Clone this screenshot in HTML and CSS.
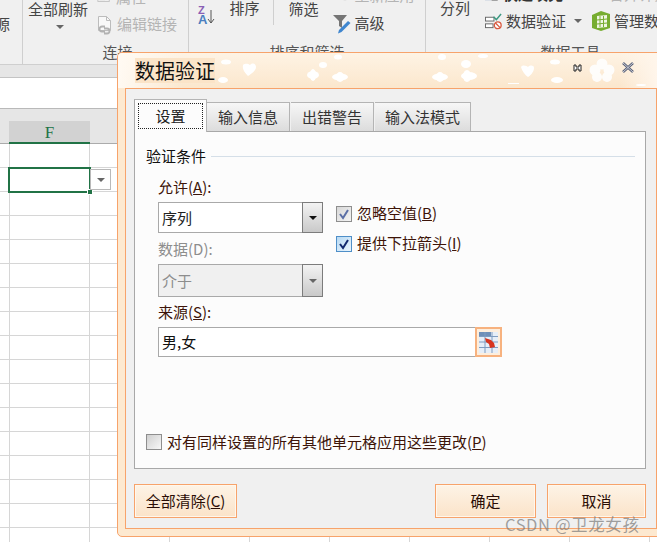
FILE: index.html
```html
<!DOCTYPE html>
<html lang="zh-CN">
<head>
  <meta charset="UTF-8">
  <title>数据验证</title>
  <link rel="stylesheet" href="styles.css">
</head>
<body>
  <div class="app">
    <!-- Ribbon -->
    <div class="ribbon">
      <div class="group group-source">
        <div class="group-body"><span class="cut-text">源</span></div>
      </div>
      <div class="group group-connect">
        <div class="group-body">
          <div class="big-item">
            <span>全部刷新</span>
            <span class="caret"></span>
          </div>
          <div class="stack">
            <div class="stack-row row-cut muted">
              <svg class="icon" viewBox="0 0 16 16"><rect x="1" y="3" width="13" height="10" fill="#f4f4f4" stroke="#bdbdbd"/><path d="M3 8h9M3 11h6" stroke="#bdbdbd"/></svg>
              <span>属性</span>
            </div>
            <div class="stack-row row-link muted">
              <svg class="icon icon-tall" viewBox="0 0 15 19"><path d="M1.500 .5h8l4 4v10h-12z" fill="#f8f8f8" stroke="#bcbcbc"/><path d="M9.500 .5v4h4" fill="none" stroke="#bcbcbc"/><path d="M8 12H5a2.500 2.500 0 0 0 0 5h3M7 14h3a2.500 2.500 0 0 1 0 5H7" fill="none" stroke="#b2b2b2" stroke-width="1.800" transform="translate(0 -1.500)"/></svg>
              <span>编辑链接</span>
            </div>
          </div>
        </div>
        <div class="group-label">连接</div>
      </div>
      <div class="group group-sort">
        <div class="group-body">
          <div class="sort-icon">
            <div class="sort-letters"><span class="letter-z">Z</span><span class="letter-a">A</span></div>
            <svg width="8" height="16" viewBox="0 0 8 16"><path d="M4 1v13M1 10l3 4 3-4" fill="none" stroke="#555"/></svg>
          </div>
          <div class="big-item item-sort">排序</div>
          <div class="big-item item-filter">筛选</div>
          <div class="stack stack-filter">
            <div class="stack-row row-reapply muted">
              <svg class="icon" viewBox="0 0 16 16"><path d="M13 8a5 5 0 1 1-2-4" fill="none" stroke="#c4c4c4" stroke-width="2"/></svg>
              <span>重新应用</span>
            </div>
            <div class="stack-row row-advanced">
              <svg class="icon icon-funnel" viewBox="0 0 18 19"><path d="M0 0h14L9 6v7L6 11V6z" fill="#757575"/><path d="M15 6l2.500 2-9 9-3.500 1.500 1-3.500z" fill="#3f86cf"/></svg>
              <span>高级</span>
            </div>
          </div>
        </div>
        <div class="group-label">排序和筛选</div>
      </div>
      <div class="group group-tools">
        <div class="group-body">
          <div class="big-item item-split">分列</div>
          <div class="stack stack-tools">
            <div class="stack-row row-top">
              <svg class="icon" viewBox="0 0 16 16"><rect x="0" y="7" width="7" height="8" fill="#4a72a8"/><rect x="8" y="7" width="6" height="8" fill="#fff" stroke="#666"/></svg>
              <span>快速填充</span>
              <span class="row-top-side">合并计算</span>
            </div>
            <div class="stack-row row-tools">
              <svg class="icon icon-check" viewBox="0 0 18 18"><rect x="0.5" y="4.500" width="9" height="4" fill="#fff" stroke="#666"/><rect x="0.5" y="11.500" width="8" height="4" fill="#fff" stroke="#666"/><path d="M9 4l3 3 5-6" fill="none" stroke="#3d9a82" stroke-width="1.600"/><circle cx="13.500" cy="13" r="3.600" fill="#fff" stroke="#d9583f" stroke-width="1.400"/><path d="M11 10.500l5 5" stroke="#d9583f" stroke-width="1.400"/></svg>
              <span>数据验证</span>
              <span class="caret caret-side"></span>
              <svg class="icon icon-cube" viewBox="0 0 20 20"><path d="M1 4l9-4 9 3v14l-9 3-9-3z" fill="#77ad30"/><path d="M6 5l10-1v12l-10 1z" fill="#f0f6e4"/><path d="M9 5v11M12.500 5v11M6 9l10-1M6 13l10-1" stroke="#77ad30"/></svg>
              <span>管理数据模型</span>
            </div>
          </div>
        </div>
        <div class="group-label">数据工具</div>
      </div>
    </div>

    <!-- Formula bar -->
    <div class="formula-band"></div>
    <div class="formula-bar"></div>

    <!-- Sheet -->
    <div class="col-header">
      <div class="col-f">F</div>
    </div>
    <div class="sheet">
      <div class="cell-selected"><span class="cell-handle"></span></div>
      <div class="cell-dropdown"><span class="caret"></span></div>
    </div>

    <!-- Dialog -->
    <div class="dialog">
      <div class="dialog-title">
        <svg class="petals" viewBox="0 0 548 36" width="548" height="36">
          <g fill="#fff">
            <ellipse cx="108" cy="9" rx="5" ry="2.500"/><ellipse cx="105" cy="27" rx="5" ry="3"/>
            <path d="M125 12c3-2 5-1 7 0 3-3 6-1 6 2 0 4-5 7-8 9-3-3-6-7-5-11z"/>
            <ellipse cx="195" cy="22" rx="6" ry="4"/><ellipse cx="195" cy="22" rx="3" ry="6"/>
            <ellipse cx="205" cy="12" rx="4" ry="3"/>
            <ellipse cx="220" cy="4" rx="4" ry="2.500"/>
            <ellipse cx="222" cy="24" rx="8" ry="3.500"/><ellipse cx="222" cy="24" rx="4" ry="5"/>
            <ellipse cx="322" cy="24" rx="8" ry="3.500"/><ellipse cx="322" cy="24" rx="4" ry="5"/>
            <ellipse cx="324" cy="4" rx="4" ry="3"/>
            <ellipse cx="348" cy="11" rx="5" ry="4"/>
            <ellipse cx="351" cy="23" rx="8" ry="4"/><ellipse cx="349" cy="23" rx="4" ry="6"/>
            <ellipse cx="365" cy="3" rx="5" ry="2"/>
            <path d="M403 14c2-3 6-1 7 0 2-2 6-2 6 1 0 4-4 8-6 9-3-2-6-6-7-10z"/>
            <rect x="390" y="30" width="11" height="1"/>
            <ellipse cx="437" cy="9" rx="5" ry="2.500"/>
            <ellipse cx="439" cy="27" rx="6" ry="3"/>
            <ellipse cx="523" cy="32" rx="5" ry="1"/>
          </g>
          <g fill="#fff" opacity="0.9">
            <circle cx="484" cy="11" r="5.500"/><circle cx="477" cy="17" r="5.500"/><circle cx="491" cy="17" r="5.500"/>
            <circle cx="479" cy="24" r="5"/><circle cx="489" cy="24" r="5"/>
          </g>
        </svg>
        <span class="title-text">数据验证</span>
        <div class="title-buttons">
          <svg class="win-min" width="9" height="8" viewBox="0 0 9 8"><path d="M1 1h2v2h3V1h2v6H6V5H3v2H1z" fill="#fff" stroke="#222" stroke-width="1"/></svg>
          <svg class="win-close" width="12" height="11" viewBox="0 0 12 11"><path d="M1 1l10 9M11 1L1 10" stroke="#5a6278" stroke-width="2.600"/><path d="M1 1l10 9M11 1L1 10" stroke="#e4e6ee" stroke-width="0.800"/></svg>
        </div>
      </div>
      <div class="dialog-body">
        <div class="tabs">
          <div class="tab tab-active"><span class="tab-focus">设置</span></div>
          <div class="tab tab-info">输入信息</div>
          <div class="tab tab-error">出错警告</div>
          <div class="tab tab-ime">输入法模式</div>
        </div>
        <div class="panel">
          <div class="legend"><span>验证条件</span><i></i></div>
          <div class="form">
            <div class="form-row">
              <div class="form-left">
                <label class="field-label">允许(<u>A</u>):</label>
                <div class="select select-allow">
                  <span class="select-value">序列</span>
                  <span class="select-btn"><span class="caret caret-black"></span></span>
                </div>
                <label class="field-label label-data">数据(D):</label>
                <div class="select select-disabled">
                  <span class="select-value">介于</span>
                  <span class="select-btn"><span class="caret"></span></span>
                </div>
              </div>
              <div class="form-right">
                <label class="check">
                  <span class="box box-grey"><svg width="12" height="12" viewBox="0 0 12 12"><path d="M2 6l3 4 5-8" fill="none" stroke="#5b6fa6" stroke-width="2"/></svg></span>
                  <span class="field-text">忽略空值(<u>B</u>)</span>
                </label>
                <label class="check">
                  <span class="box box-blue"><svg width="12" height="12" viewBox="0 0 12 12"><path d="M2 6l3 4 5-8" fill="none" stroke="#12296e" stroke-width="2"/></svg></span>
                  <span class="field-text">提供下拉箭头(<u>I</u>)</span>
                </label>
              </div>
            </div>
            <label class="field-label label-source">来源(<u>S</u>):</label>
            <div class="source">
              <span class="source-value">男,女</span>
              <span class="ref-btn">
                <svg width="19" height="21" viewBox="0 0 19 21"><rect width="19" height="21" fill="#e6eef8"/><rect width="12" height="4" fill="#6f8fb8"/><path d="M0 4.500h19M0 10h19M0 15.500h19M6 0v21M13 0v21" stroke="#7f9cc0"/><path d="M6 6l6 2 3 3 1 4-5 1-1-4-3-2z" fill="#d8341e"/></svg>
              </span>
            </div>
          </div>
          <label class="check check-all">
            <span class="box box-empty"></span>
            <span class="field-text">对有同样设置的所有其他单元格应用这些更改(<u>P</u>)</span>
          </label>
        </div>
        <div class="actions">
          <button class="btn btn-clear">全部清除(<u>C</u>)</button>
          <button class="btn btn-ok">确定</button>
          <button class="btn btn-cancel">取消</button>
        </div>
      </div>
    </div>

    <div class="watermark">CSDN @卫龙女孩</div>
  </div>
</body>
</html>
```

FILE: styles.css
```css
:root {
  --ribbon-bg: #f0f0f0;
  --ribbon-line: #cfcfcf;
  --band-bg: #e6e6e6;
  --grid-line: #d6d6d6;
  --excel-green: #217346;
  --skin-line: #f7a36b;
  --skin-bg: #fde9d0;
  --label-color: #3d1408;
}

* {
  margin: 0;
  padding: 0;
  box-sizing: border-box;
}

body {
  font-family: "Noto Sans CJK SC", "Liberation Sans", sans-serif;
  font-size: 15px;
  line-height: 20px;
  color: #222;
  background: #fff;
}

.app {
  position: relative;
  width: 657px;
  height: 542px;
  overflow: hidden;
}

/* Ribbon */
.ribbon {
  display: flex;
  height: 65px;
  background: var(--ribbon-bg);
  border-bottom: 1px solid var(--ribbon-line);
  color: #444;
}

.group {
  display: flex;
  flex-direction: column;
  flex: none;
  height: 64px;
  border-right: 1px solid var(--ribbon-line);
  white-space: nowrap;
}

.group-source { width: 23px; }
.group-connect { width: 166px; }
.group-sort { width: 237px; }
.group-tools { width: 231px; border-right: 0; }

.group-body {
  display: flex;
  height: 43px;
}

.group-label {
  height: 20px;
  margin-top: -1px;
  text-align: center;
  color: #555;
}

.group-connect .group-label { width: 189px; }
.group-tools .group-label { padding-left: 58px; }

.cut-text {
  margin: 14px 0 0 -5px;
}

.big-item {
  display: flex;
  flex-direction: column;
  align-items: center;
  gap: 8px;
  line-height: 17px;
}

.group-connect .big-item { margin-left: 5px; width: 60px; }
.group-connect .caret { margin-left: 4px; }

.caret {
  display: block;
  width: 0;
  height: 0;
  border-left: 4px solid transparent;
  border-right: 4px solid transparent;
  border-top: 4px solid #666;
}

.stack {
  display: flex;
  flex-direction: column;
  margin-top: -17px;
}

.stack-row {
  display: flex;
  align-items: center;
  gap: 5px;
  height: 26px;
}

.muted { color: #b4b4b4; }

.group-connect .stack { margin-left: 9px; }
.row-cut { height: 28px; }

.icon { flex: none; width: 14px; height: 14px; }
.icon-tall { width: 15px; height: 19px; margin-top: 2px; }

.stack-filter { margin: -18px 0 0 15px; }
.row-reapply { margin-left: 5px; gap: 2px; }
.row-advanced { height: 30px; gap: 3px; }
.icon-funnel { width: 18px; height: 19px; margin-top: 2px; }

.sort-icon {
  display: flex;
  align-items: flex-end;
  height: 25px;
  margin: 0 0 0 9px;
}

.sort-letters {
  display: flex;
  flex-direction: column;
  font-family: "Liberation Sans", sans-serif;
  font-size: 11px;
  line-height: 9px;
  font-weight: bold;
}

.letter-z { color: #8a5fb5; }
.letter-a { color: #4b7fc0; font-size: 13px; line-height: 10px; }

.item-sort { margin: -1px 0 0 14px; }
.item-filter {
  margin-left: 14px;
  padding-left: 14px;
  height: 25px;
  border-left: 1px solid var(--ribbon-line);
}

.item-split { margin: -1px 0 0 14px; }
.stack-tools { margin: -14px 0 0 15px; }
.stack-tools .stack-row { gap: 4px; }
.row-top { height: 16px; color: #333; font-weight: bold; }
.row-top-side { margin-left: 42px; color: #b4b4b4; font-weight: normal; }
.stack-tools .row-tools { height: 38px; }
.icon-check { width: 17px; height: 17px; }
.icon-cube { width: 20px; height: 20px; margin: 0 -1px 0 5px; }
.caret-side { margin-left: 4px; }

/* Formula bar */
.formula-band {
  height: 13px;
  background: var(--band-bg);
  border-bottom: 1px solid #c4c4c4;
}

.formula-bar {
  height: 31px;
  background: #fff;
  border-bottom: 1px solid #b9b9b9;
}

/* Sheet */
.col-header {
  display: flex;
  align-items: flex-end;
  height: 35px;
  padding-left: 9px;
  background: var(--band-bg);
  border-bottom: 1px solid #ababab;
}

.col-f {
  width: 81px;
  height: 23px;
  margin-bottom: -1px;
  text-align: center;
  font-family: "Liberation Serif", serif;
  font-size: 17px;
  line-height: 24px;
  color: var(--excel-green);
  background: #d2d2d2;
  border-bottom: 2px solid var(--excel-green);
}

.sheet {
  position: relative;
  height: 398px;
  background-color: #fff;
  background-image:
    linear-gradient(to right, var(--grid-line) 1px, transparent 1px),
    linear-gradient(to bottom, var(--grid-line) 1px, transparent 1px);
  background-size: 80px 24px;
  background-position: 9px -1px;
}

.cell-selected {
  position: absolute;
  left: 8px;
  top: 23px;
  width: 83px;
  height: 26px;
  border: 2px solid var(--excel-green);
}

.cell-handle {
  position: absolute;
  right: -4px;
  bottom: -4px;
  width: 4px;
  height: 4px;
  background: var(--excel-green);
  border: 1px solid #fff;
  box-sizing: content-box;
}

.cell-dropdown {
  position: absolute;
  left: 90px;
  top: 25px;
  display: flex;
  align-items: center;
  justify-content: center;
  width: 21px;
  height: 21px;
  background: #fff;
  border: 1px solid #b9b9b9;
}

/* Dialog */
.dialog {
  position: absolute;
  left: 117px;
  top: 52px;
  display: flex;
  flex-direction: column;
  width: 548px;
  height: 485px;
  padding: 0 7px 7px;
  background: var(--skin-bg);
  border: 1px solid var(--skin-line);
  border-radius: 5px;
}

.dialog-title {
  position: relative;
  display: flex;
  align-items: center;
  flex: none;
  height: 35px;
  margin: 0 -7px;
  padding-left: 17px;
  border-top-left-radius: 4px;
  background:
    linear-gradient(to right, transparent 92%, #fff6ec 99%),
    linear-gradient(to right, #fffaf3, transparent 12%),
    linear-gradient(to bottom, #fef3e4, #fbe7cd);
}

.petals {
  position: absolute;
  left: 0;
  top: 0;
}

.title-text {
  position: relative;
  font-size: 20px;
  line-height: 25px;
  color: #111;
  background: #fbe4c8;
}

.title-buttons {
  position: absolute;
  left: 455px;
  top: 9px;
  display: flex;
  align-items: center;
  gap: 40px;
}

.dialog-body {
  flex: 1;
  display: flex;
  flex-direction: column;
  padding: 10px 10px 10px 8px;
  background: #f0f0f0;
  border: 1px solid var(--skin-line);
}

.tabs {
  display: flex;
  align-items: flex-end;
  height: 33px;
  margin-bottom: -1px;
}

.tab {
  display: flex;
  align-items: center;
  justify-content: center;
  height: 30px;
  margin-right: 1px;
  color: #333;
  background: linear-gradient(to bottom, #f7f7f7, #dcdcdc);
  border: 1px solid #b4b4b4;
  border-bottom: 1px solid #a8a8a8;
  border-left: 0;
}

.tab-active {
  position: relative;
  z-index: 1;
  width: 73px;
  height: 33px;
  margin-right: 0;
  padding: 3px;
  color: #222;
  background: #fcfcfc;
  border-left: 1px solid #a8a8a8;
  border-bottom: 0;
}

.tab-focus {
  display: block;
  width: 100%;
  height: 100%;
  text-align: center;
  line-height: 23px;
  border: 1px dotted #222;
}

.tab-info { width: 83px; }
.tab-error { width: 83px; }
.tab-ime { width: 96px; }

.panel {
  flex: none;
  display: flex;
  flex-direction: column;
  height: 338px;
  padding: 14px 10px 16px 11px;
  background: #fcfcfc;
  border: 1px solid #a8a8a8;
}

.legend {
  display: flex;
  align-items: center;
  gap: 5px;
  color: #111;
}

.legend i {
  flex: 1;
  height: 1px;
  background: #d5dfe8;
}

.form { padding-left: 12px; }

.form-row {
  display: flex;
  gap: 13px;
}

.form-left { width: 165px; }

.form-right {
  display: flex;
  flex-direction: column;
  gap: 10px;
  padding-top: 37px;
}

.field-label {
  display: block;
  margin-top: 11px;
  color: var(--label-color);
}

.label-data {
  margin-top: 6px;
  color: #8d8d8d;
}

.label-source { margin-top: 5px; }

.select {
  display: flex;
  height: 31px;
  margin-top: 5px;
  background: #fff;
  border: 1px solid #a9a9a9;
}

.select-disabled {
  height: 33px;
  color: #8d8d8d;
  background: #f0f0f0;
}

.select-value {
  flex: 1;
  padding-left: 3px;
  line-height: 29px;
  color: inherit;
}

.select-disabled .select-value { line-height: 31px; }

.select-btn {
  display: flex;
  align-items: center;
  justify-content: center;
  width: 21px;
  background: linear-gradient(to bottom, #f3f3f3, #c9c9c9);
  border: 1px solid #7c7c7c;
  margin: -1px -1px -1px 0;
}

.caret-black { border-top-color: #111; }

.check {
  display: flex;
  align-items: center;
  gap: 5px;
}

.field-text { color: var(--label-color); }

.box {
  display: flex;
  align-items: center;
  justify-content: center;
  width: 16px;
  height: 16px;
  margin-top: 2px;
  border: 1px solid #8e8e8e;
}

.box-grey { background: linear-gradient(135deg, #d8d8d8, #f4f4f4); }
.box-blue { background: linear-gradient(135deg, #b8daf4, #eaf5fd); border-color: #4f8fc8; }
.box-empty { margin-top: 0; background: linear-gradient(135deg, #cfcfcf, #f8f8f8); }

.source {
  display: flex;
  align-items: center;
  width: 344px;
  height: 30px;
  margin-top: 5px;
  background: #fff;
  border: 1px solid #a9a9a9;
}

.source-value {
  flex: 1;
  padding-left: 3px;
  color: #111;
}

.ref-btn {
  display: flex;
  align-items: center;
  justify-content: center;
  width: 27px;
  height: 30px;
  margin-right: -1px;
  background: #fdeedd;
  border: 2px solid #f7b27f;
}

.check-all { margin-top: auto; }

/* Buttons */
.actions {
  display: flex;
  gap: 11px;
  margin-top: 15px;
}

.btn {
  height: 34px;
  font: inherit;
  color: #2a0d05;
  background: linear-gradient(to bottom, #fdf3e6, #fbe3c9);
  border: 1px solid var(--skin-line);
  box-shadow: inset 0 0 0 1px #fff7ec;
}

.btn-clear { width: 103px; margin-right: auto; }
.btn-ok { width: 101px; }
.btn-cancel { width: 99px; }

.watermark {
  position: absolute;
  left: 505px;
  top: 514px;
  font-size: 16.5px;
  letter-spacing: 0.6px;
  color: rgba(125, 125, 125, 0.72);
}
```
